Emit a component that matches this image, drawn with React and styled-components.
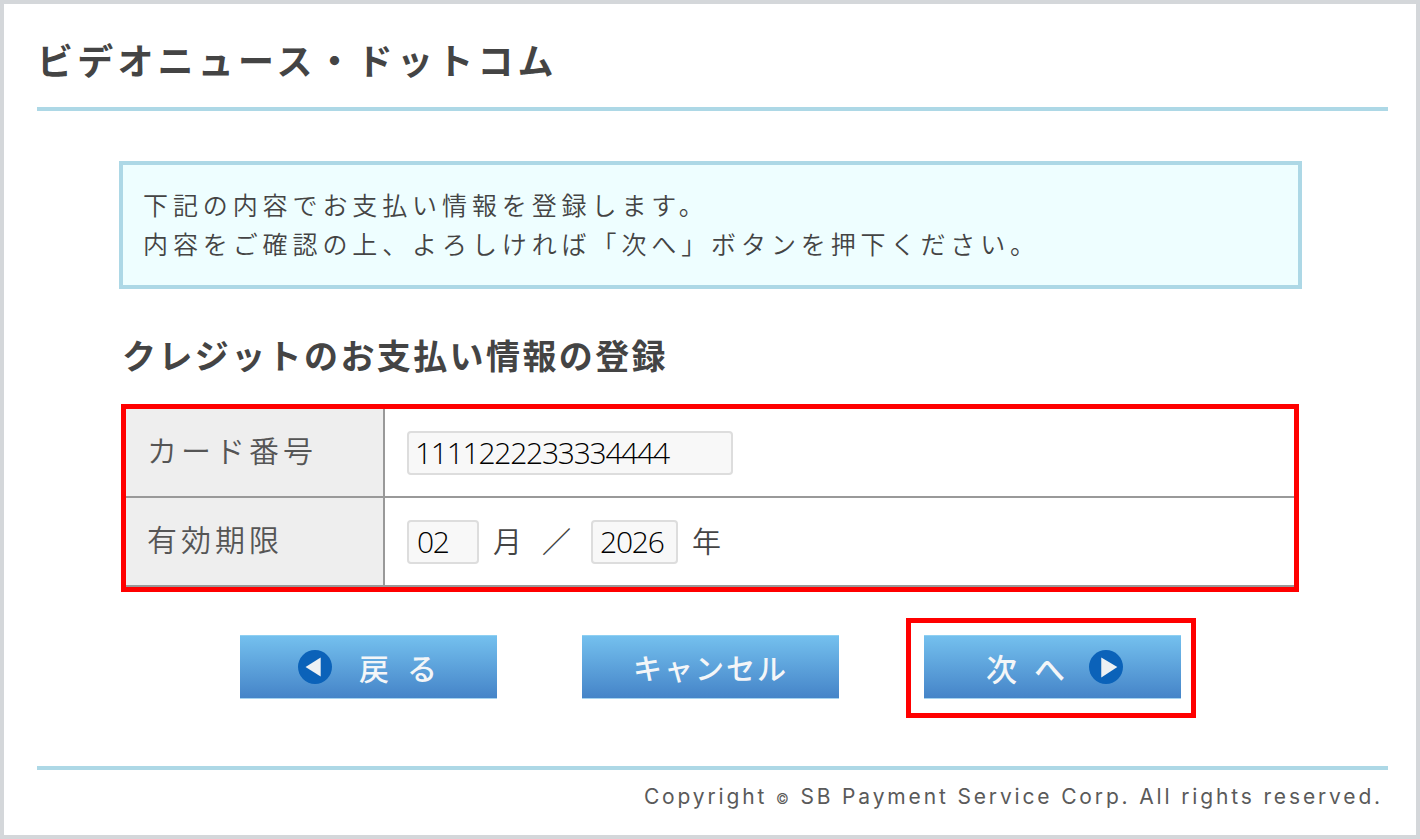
import styled, { createGlobalStyle } from "styled-components";

const Global = createGlobalStyle`
	html, body {
		margin: 0;
		padding: 0;
		background: #fff;
	}
	* {
		box-sizing: border-box;
	}
`;

const jpFont = `"Noto Sans CJK JP", "Noto Sans", sans-serif`;

const Frame = styled.div`
	width: 1420px;
	height: 839px;
	border: 4px solid #d4d7da;
	background: #fff;
	padding: 0 28px 0 33px;
	font-family: ${jpFont};
	color: #444;
	overflow: hidden;
`;

const Header = styled.header`
	height: 107px;
	border-bottom: 4px solid #add8e6;
	padding-top: 30px;
`;

const SiteTitle = styled.h1`
	margin: 0;
	font-size: 36px;
	line-height: 50px;
	font-weight: 700;
	letter-spacing: 4.2px;
	color: #444;
`;

const Main = styled.main`
	margin: 50px 0 0 82px;
	width: 1183px;
`;

const Notice = styled.div`
	height: 128px;
	border: 4px solid #add8e6;
	background: #eefeff;
	padding: 20px 20px;
	font-size: 25px;
	line-height: 39px;
	letter-spacing: 4.9px;
	color: #444;
	font-weight: 350;
`;

const SectionTitle = styled.h2`
	margin: 41px 0 0 3px;
	font-size: 34px;
	line-height: 50px;
	letter-spacing: 2.4px;
	font-weight: 700;
	color: #444;
`;

const FormTable = styled.div`
	margin: 24px 0 0 2px;
	width: 1178px;
	height: 188px;
	border: 5px solid #f00;
	display: grid;
	grid-template-rows: 89px 89px;
`;

const Row = styled.div`
	display: grid;
	grid-template-columns: 259px 1fr;
	border-bottom: 2px solid #999;
`;

const Label = styled.div`
	background: #eee;
	border-right: 2px solid #999;
	display: flex;
	align-items: center;
	padding: 0 0 7px 21px;
	font-size: 30px;
	letter-spacing: 4px;
	font-weight: 350;
	color: #555;
`;

const Field = styled.div`
	display: flex;
	align-items: center;
	padding-left: 22px;
	font-size: 29px;
	font-weight: 350;
	color: #444;
`;

const Input = styled.input`
	width: ${(p) => p.$width}px;
	height: 44px;
	border: 2px solid #ddd;
	border-radius: 4px;
	background: #f8f8f8;
	padding: 0 0 0 ${(p) => p.$pad}px;
	font-family: "Open Sans", sans-serif;
	font-size: 30px;
	font-weight: 300;
	letter-spacing: -1.25px;
	color: #000;
	outline: none;
`;

const Unit = styled.span`
	margin-left: 14px;
	margin-bottom: 3px;
`;

const Slash = styled.span`
	margin: 0 20px 3px 20px;
	font-size: 29px;
	font-weight: 500;
`;

const Actions = styled.div`
	margin: 43px 0 0 121px;
	display: flex;
	gap: 85px;
`;

const ActionButton = styled.button`
	position: relative;
	width: 257px;
	height: 64px;
	border: 0;
	border-top: 1px solid #8fd0f2;
	border-bottom: 1px solid #a5d3f0;
	background: linear-gradient(#74c0ee, #4584c8);
	color: #f4f6f8;
	font-family: ${jpFont};
	font-size: ${(p) => p.$size}px;
	font-weight: 500;
	letter-spacing: ${(p) => p.$spacing}px;
	display: flex;
	align-items: center;
	justify-content: center;
	gap: ${(p) => p.$gap || 0}px;
	padding: ${(p) => p.$padding || 0};
`;

// red annotation box that sits around the next button
const Highlight = styled.span`
	position: absolute;
	top: -18px;
	left: -18px;
	right: -15px;
	bottom: -20px;
	border: 5px solid #f00;
`;

const Footer = styled.footer`
	margin-top: 67px;
	border-top: 4px solid #add8e6;
	padding: 9px 5px 0 0;
	text-align: right;
	font-family: "Inter", "Noto Sans", sans-serif;
	font-size: 21px;
	line-height: 36px;
	letter-spacing: 2.85px;
	color: #5a5a5a;
`;

const CopyMark = styled.span`
	font-size: 14px;
`;

function ArrowIcon({ left }) {
	return (
		<svg width="34" height="34" viewBox="0 0 36 36">
			<ellipse cx="18" cy="18" rx="18" ry="18" fill="#0b62b9" />
			<path d={left ? "M8 18 L24 8 V28 Z" : "M30 18 L13 8 V29 Z"} fill="#eef1f4" />
		</svg>
	);
}

export default function App() {
	return (
		<Frame>
			<Global />
			<Header>
				<SiteTitle>ビデオニュース・ドットコム</SiteTitle>
			</Header>
			<Main>
				<Notice>
					下記の内容でお支払い情報を登録します。
					<br />
					内容をご確認の上、よろしければ「次へ」ボタンを押下ください。
				</Notice>
				<SectionTitle>クレジットのお支払い情報の登録</SectionTitle>
				<FormTable>
					<Row>
						<Label>カード番号</Label>
						<Field>
							<Input readOnly value="1111222233334444" $width={326} $pad={6} />
						</Field>
					</Row>
					<Row>
						<Label>有効期限</Label>
						<Field>
							<Input readOnly value="02" $width={72} $pad={8} />
							<Unit>月</Unit>
							<Slash>／</Slash>
							<Input readOnly value="2026" $width={87} $pad={7} />
							<Unit>年</Unit>
						</Field>
					</Row>
				</FormTable>
				<Actions>
					<ActionButton $size={30} $spacing={18} $gap={27} $padding="0 0 0 16px">
						<ArrowIcon left />
						<span>戻る</span>
					</ActionButton>
					<ActionButton $size={29} $spacing={2}>キャンセル</ActionButton>
					<ActionButton $size={31} $spacing={17} $gap={7} $padding="0 0 0 4px">
						<span>次へ</span>
						<ArrowIcon />
						<Highlight />
					</ActionButton>
				</Actions>
			</Main>
			<Footer>
				Copyright <CopyMark>©</CopyMark> SB Payment Service Corp. All rights reserved.
			</Footer>
		</Frame>
	);
}
